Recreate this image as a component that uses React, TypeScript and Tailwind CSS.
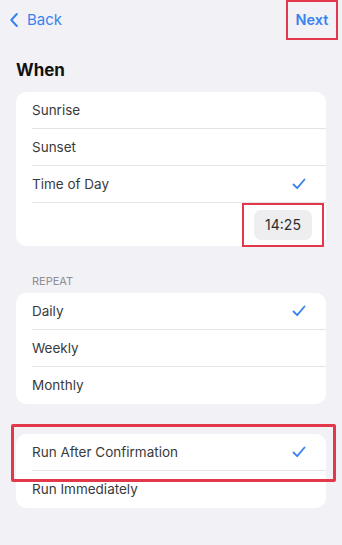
import React from 'react';

const Check = () => (
  <svg width="14" height="12" viewBox="0 0 14 12" fill="none" className="text-[#3a82f0]">
    <path d="M1.5 6.5 L5.2 10.2 L12.5 1.5" stroke="currentColor" strokeWidth="1.8" strokeLinecap="round" strokeLinejoin="round" />
  </svg>
);

interface RowProps {
  label: string;
  checked?: boolean;
  last?: boolean;
}

const Row: React.FC<RowProps> = ({ label, checked, last }) => (
  <div className="pl-4">
    <div className={`h-[37px] flex items-center justify-between pr-5 ${last ? '' : 'border-b border-[#e4e4e8]'}`}>
      <span className="text-[13.5px] text-[#3a3a3c]">{label}</span>
      {checked && <Check />}
    </div>
  </div>
);

const App: React.FC = () => {
  return (
    <div className="min-h-[545px] w-full bg-[#f2f1f6] font-['Inter',sans-serif] pb-10">
      {/* nav */}
      <div className="h-10 flex items-center justify-between pl-[10px] pr-1">
        <div className="flex items-center gap-[9px] text-[#3a82f0]">
          <svg width="8" height="14" viewBox="0 0 8 14" fill="none">
            <path d="M6.8 1 L1.3 7 L6.8 13" stroke="currentColor" strokeWidth="2" strokeLinecap="round" strokeLinejoin="round" />
          </svg>
          <span className="text-[15px]">Back</span>
        </div>
        <div className="h-10 w-[52px] border-2 border-[#e2384a] flex items-center justify-center">
          <span className="text-[14.5px] font-semibold text-[#3a82f0]">Next</span>
        </div>
      </div>

      <h1 className="mt-[18px] mb-[10px] pl-4 text-[17px] leading-6 font-bold text-[#111]">When</h1>

      <div className="mx-4 rounded-[10px] bg-white overflow-visible">
        <Row label="Sunrise" />
        <Row label="Sunset" />
        <Row label="Time of Day" checked />
        <div className="h-[43px] flex items-center justify-end pr-[2px]">
          <div className="h-[44px] border-2 border-[#e2384a] px-[10px] flex items-center">
            <div className="h-[30px] w-[58px] rounded-[7px] bg-[#eeeef0] flex items-center justify-center text-[14px] text-[#2c2c2e]">
              14:25
            </div>
          </div>
        </div>
      </div>

      <div className="mt-[29px] mb-[5px] pl-8 text-[11px] leading-[13px] uppercase text-[#8e8e93]">Repeat</div>

      <div className="mx-4 rounded-[10px] bg-white">
        <Row label="Daily" checked />
        <Row label="Weekly" />
        <Row label="Monthly" last />
      </div>

      <div className="relative mx-4 mt-[30px] rounded-[10px] bg-white">
        <Row label="Run After Confirmation" checked />
        <Row label="Run Immediately" last />
        <div className="absolute left-[-5px] top-[-10px] w-[325px] h-[58px] border-[3px] border-[#e2384a] rounded-[2px] pointer-events-none" />
      </div>
    </div>
  );
};

export default App;
